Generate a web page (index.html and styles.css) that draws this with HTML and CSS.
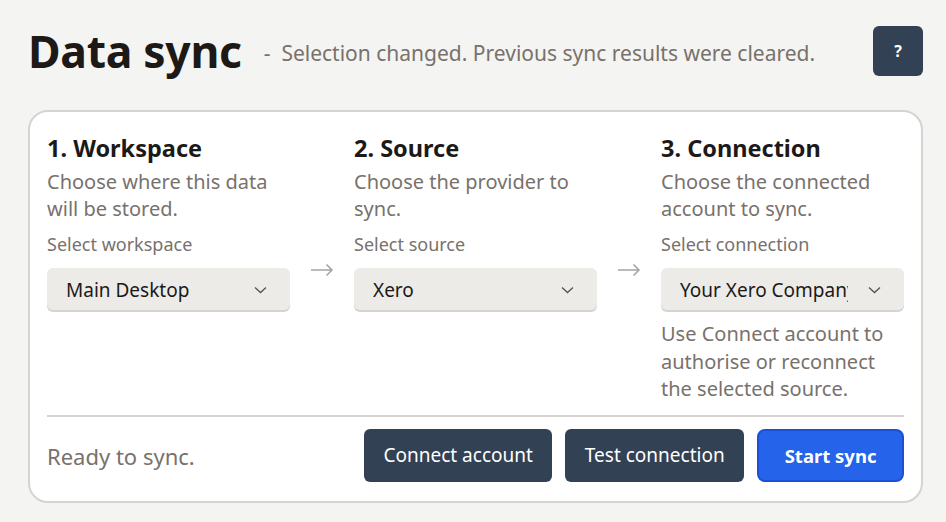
FILE: index.html
```html
<!DOCTYPE html>
<html lang="en">
<head>
  <meta charset="utf-8">
  <title>Data sync</title>
  <link rel="stylesheet" href="styles.css">
</head>
<body>

<div id="wrapper">
  <div id="header">
    <h1 id="title">Data sync</h1>
    <div id="status">- &nbsp;Selection changed. Previous sync results were cleared.</div>
    <button id="help" class="btns">?</button>
  </div>

  <div id="card">
    <div id="steps">
      <div class="step">
        <div class="stepTitle">1. Workspace</div>
        <div class="stepText">Choose where this data will be stored.</div>
        <div class="label">Select workspace</div>
        <div class="select"><span>Main Desktop</span><svg width="13" height="8" viewBox="0 0 13 8"><path d="M1 1.5 L6.5 6.5 L12 1.5" fill="none" stroke="#57534e" stroke-width="1.3"/></svg></div>
      </div>
      <div class="arrow"><svg width="24" height="14" viewBox="0 0 24 14"><path d="M1 7 H22 M16.5 1.5 L22 7 L16.5 12.5" fill="none" stroke="#a8a29e" stroke-width="1.5"/></svg></div>
      <div class="step">
        <div class="stepTitle">2. Source</div>
        <div class="stepText">Choose the provider to sync.</div>
        <div class="label">Select source</div>
        <div class="select"><span>Xero</span><svg width="13" height="8" viewBox="0 0 13 8"><path d="M1 1.5 L6.5 6.5 L12 1.5" fill="none" stroke="#57534e" stroke-width="1.3"/></svg></div>
      </div>
      <div class="arrow"><svg width="24" height="14" viewBox="0 0 24 14"><path d="M1 7 H22 M16.5 1.5 L22 7 L16.5 12.5" fill="none" stroke="#a8a29e" stroke-width="1.5"/></svg></div>
      <div class="step">
        <div class="stepTitle">3. Connection</div>
        <div class="stepText">Choose the connected account to sync.</div>
        <div class="label">Select connection</div>
        <div class="select"><span>Your Xero Company</span><svg width="13" height="8" viewBox="0 0 13 8"><path d="M1 1.5 L6.5 6.5 L12 1.5" fill="none" stroke="#57534e" stroke-width="1.3"/></svg></div>
        <div class="hint">Use Connect account to authorise or reconnect the selected source.</div>
      </div>
    </div>

    <div id="footer">
      <div id="ready">Ready to sync.</div>
      <div id="actions">
        <button class="btns dark">Connect account</button>
        <button class="btns dark">Test connection</button>
        <button class="btns primary">Start sync</button>
      </div>
    </div>
  </div>
</div>

</body>
</html>
```

FILE: styles.css
```css
html, body {
  margin: 0;
  background-color: #f4f4f2;
  font-family: "Noto Sans", "Open Sans", sans-serif;
  color: #1c1917;
}

#wrapper {
  padding: 26px 23px 0 28px;
}

#header {
  display: flex;
  align-items: center;
  height: 50px;
}

#title {
  margin: 0;
  font-size: 44.5px;
  font-weight: 700;
  letter-spacing: -0.3px;
  line-height: 50px;
}

#status {
  margin-left: 22px;
  margin-top: 3px;
  font-size: 21px;
  color: #78716c;
  flex: 1;
}

#help {
  width: 50px;
  height: 50px;
  padding: 0;
  font-size: 16px;
  font-weight: 700;
}

#card {
  margin-top: 34px;
  background-color: #ffffff;
  border: 2px solid #d6d3d1;
  border-radius: 20px;
  padding: 20px 17px 19px 17px;
  width: 857px;
}

#steps {
  display: grid;
  grid-template-columns: 243px 64px 243px 64px 243px;
  padding-bottom: 12px;
  border-bottom: 2px solid #d6d3d1;
}

.stepTitle {
  font-size: 23.5px;
  font-weight: 700;
  line-height: 32px;
}

.stepText {
  font-size: 20px;
  line-height: 27px;
  color: #78716c;
  margin-top: 4px;
}

.label {
  font-size: 18px;
  color: #78716c;
  margin-top: 9px;
  line-height: 27px;
}

.select {
  margin-top: 10px;
  height: 41px;
  background-color: #ecebe8;
  border-radius: 6px;
  box-shadow: 0 2px 0 #d6d3d1;
  display: flex;
  align-items: center;
  justify-content: space-between;
  padding: 1px 23px 0 19px;
  font-size: 19px;
  overflow: hidden;
}

.select span {
  white-space: nowrap;
  overflow: hidden;
  width: 168px;
}

.arrow {
  text-align: center;
  padding-top: 128px;
}

.hint {
  margin-top: 10px;
  font-size: 20px;
  line-height: 27.5px;
  color: #78716c;
}

#footer {
  display: flex;
  align-items: center;
  justify-content: space-between;
  padding-top: 12px;
}

#ready {
  font-size: 22px;
  color: #78716c;
  margin-top: 2px;
}

#actions {
  display: flex;
  gap: 13px;
}

button {
  font-family: "Noto Sans", "Open Sans", sans-serif;
  border: none;
  color: #ffffff;
  cursor: pointer;
}

.btns {
  background-color: #334155;
  border-radius: 6px;
}

.dark {
  height: 53px;
  padding: 0 19.5px;
  font-size: 19px;
}

.primary {
  height: 53px;
  padding: 0 25.5px;
  font-size: 18.5px;
  font-weight: 700;
  background-color: #2563eb;
  border: 2px solid #1d4ed8;
  border-radius: 8px;
}
```
